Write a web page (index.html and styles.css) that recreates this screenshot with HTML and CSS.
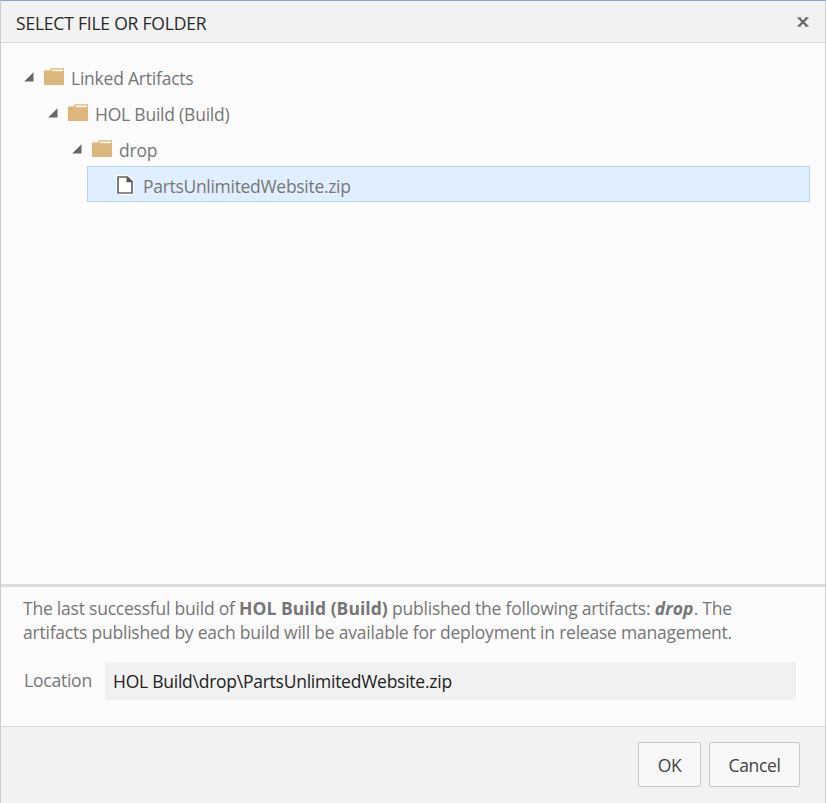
FILE: index.html
```html
<!DOCTYPE html>
<html lang="en">
<head>
<meta charset="utf-8">
<title>Select file or folder</title>
<link rel="stylesheet" href="styles.css">
</head>
<body>
<svg class="defs" aria-hidden="true">
  <symbol id="arrow" viewBox="0 0 10 10"><path d="M9.5 .2V9.5H.2z" fill="#666"/></symbol>
  <symbol id="folder" viewBox="0 0 20 17"><path d="M0 2.5h5.5L7.5.3H20V17H0z" fill="#dcb67a"/><path d="M8.3 1.5H19v1.7H7.2z" fill="#fdf6e8"/></symbol>
  <symbol id="file" viewBox="0 0 18 20"><path d="M0 0h13l5 5v15H0z" fill="#fcfcfc"/><path d="M2 2h9.5L16 6.5V18H2z" fill="#fff" stroke="#666" stroke-width="1.7"/><path d="M10.5 1.5v5.7H16.5z" fill="#555"/></symbol>
</svg>
<div class="dialog">
  <header class="header">
    <h1 class="title">SELECT FILE OR FOLDER</h1>
    <svg class="close" viewBox="0 0 12 10"><path d="M2 1l8 8M10 1L2 9" stroke="#666" stroke-width="2.4"/><path d="M.5 1h3.5M8 1h3.5M.5 9h3.5M8 9h3.5" stroke="#777" stroke-width="1.3"/></svg>
  </header>
  <main class="tree">
    <div class="row level1"><svg class="arrow"><use href="#arrow"/></svg><svg class="folder"><use href="#folder"/></svg><span>Linked Artifacts</span></div>
    <div class="row level2"><svg class="arrow"><use href="#arrow"/></svg><svg class="folder"><use href="#folder"/></svg><span>HOL Build (Build)</span></div>
    <div class="row level3"><svg class="arrow"><use href="#arrow"/></svg><svg class="folder"><use href="#folder"/></svg><span>drop</span></div>
    <div class="row selected"><svg class="file"><use href="#file"/></svg><span class="filename">PartsUnlimitedWebsite.zip</span></div>
  </main>
  <section class="details">
    <p class="note">The last successful build of <b>HOL Build (Build)</b> published the following artifacts: <b><i>drop</i></b>. The<br>artifacts published by each build will be available for deployment in release management.</p>
    <div class="location"><span class="label">Location</span><div class="field"><span class="path">HOL Build\drop\PartsUnlimitedWebsite.zip</span></div></div>
  </section>
  <footer class="footer"><button class="ok">OK</button><button class="cancel">Cancel</button></footer>
</div>
</body>
</html>
```
FILE: styles.css
```css
* { box-sizing: border-box; }
body { margin: 0; font: 17.5px/24px "Open Sans", "Noto Sans", sans-serif; color: #767676; letter-spacing: -.22px; }
.defs { display: none; }
.dialog { height: 803px; display: flex; flex-direction: column; background: #fcfcfc; border: 1px solid #ccc; border-top-color: #8e9fc8; border-bottom: 0; white-space: nowrap; }
.header { height: 42px; flex: none; display: flex; align-items: center; justify-content: space-between; padding: 2px 16px 0 15px; background: #f2f2f2; border-bottom: 1px solid #d8d8d8; }
.title { margin: 0; font-size: 17.5px; font-weight: 400; color: #292929; letter-spacing: -.21px; }
.close { width: 12px; height: 10px; margin-top: -1px; }
.tree { height: 541px; flex: none; padding: 17px 15px 0 14px; }
.row { height: 36px; display: flex; align-items: center; }
.arrow { width: 10px; height: 10px; margin: -3px 11px 0 9px; }
.folder { width: 20px; height: 17px; margin: -3px 7px 0 -1px; }
.level2 { padding-left: 24px; }
.level3 { padding-left: 48px; }
.selected { margin: -2px 0 0 72px; padding: 4px 0 0 28px; background: #e0efff; border: 1px solid #b5d5f9; }
.file { width: 18px; height: 20px; margin: -2px 9px 0 0; }
.filename { letter-spacing: -.3px; }
.details { height: 142px; flex: none; padding: 9px 29px 0 22px; border-top: 3px solid #dedede; }
.note { margin: 0; }
.note b { letter-spacing: .03px; }
.note b i { letter-spacing: .15px; }
.location { display: flex; align-items: center; margin-top: 18px; }
.label { width: 82px; padding: 0 0 2px 1px; }
.field { flex: 1; height: 38px; display: flex; align-items: center; padding: 0 0 1px 8px; background: #f1f1f1; color: #212121; }
.path { letter-spacing: -.25px; }
.footer { flex: 1; display: flex; gap: 8px; justify-content: flex-end; padding: 15px 25px 0 0; background: #f2f2f2; border-top: 1px solid #d9d9d9; }
button { height: 45px; padding: 0; font: inherit; letter-spacing: -.35px; color: #444; background: #f8f8f8; border: 1px solid #c8c8c8; border-radius: 2px; }
.ok { width: 63px; }
.cancel { width: 91px; }
```
